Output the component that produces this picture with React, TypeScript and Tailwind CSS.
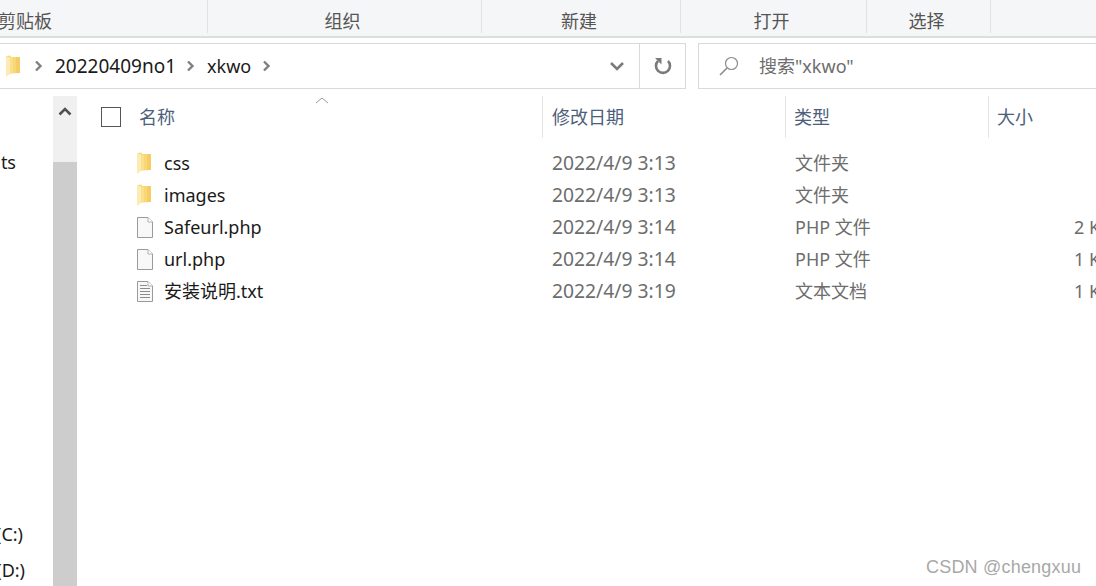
const cjk = "font-['Noto_Sans','Noto_Sans_CJK_SC',sans-serif]";

const ribbon = [
  { label: '剪贴板', width: 'w-[208px] justify-start', inner: '-ml-[2px] whitespace-nowrap' },
  { label: '组织', width: 'w-[274px] justify-center', inner: 'pr-[4px]' },
  { label: '新建', width: 'w-[199px] justify-center', inner: 'pr-[4px]' },
  { label: '打开', width: 'w-[186px] justify-center', inner: 'pr-[4px]' },
  { label: '选择', width: 'w-[124px] justify-center', inner: 'pr-[4px]' },
];

const files = [
  { name: 'css', date: '2022/4/9 3:13', type: '文件夹', size: '', icon: 'folder' },
  { name: 'images', date: '2022/4/9 3:13', type: '文件夹', size: '', icon: 'folder' },
  { name: 'Safeurl.php', date: '2022/4/9 3:14', type: 'PHP 文件', size: '2 KB', icon: 'file' },
  { name: 'url.php', date: '2022/4/9 3:14', type: 'PHP 文件', size: '1 KB', icon: 'file' },
  { name: '安装说明.txt', date: '2022/4/9 3:19', type: '文本文档', size: '1 KB', icon: 'text' },
];

function FolderIcon() {
  return (
    <svg width="16" height="22" viewBox="0 0 16 22" className="shrink-0">
      <path d="M1 1 L5.5 0.5 L6 2 L15 2 L15 18 L5 18.5 L1 21.5 Z" fill="#f8d775" />
      <path d="M1 1 L5 2.5 L5 18.5 L1 21.5 Z" fill="#fcebb4" />
      <path d="M5 2.5 L8 2.5 L8 18 L5 18.5 Z" fill="#fbe08c" />
      <path d="M11 2 L15 2 L15 18 L11 18 Z" fill="#f5cd66" />
    </svg>
  );
}

function FileIcon() {
  return (
    <svg width="18" height="21" viewBox="0 0 18 21" className="shrink-0">
      <path d="M1.5 0.5 H12 L16.5 5 V20.5 H1.5 Z" fill="#f8f8f8" stroke="#9a9a9a" />
      <path d="M12 0.5 V5 H16.5" fill="#fff" stroke="#b0b0b0" />
    </svg>
  );
}

function TextIcon() {
  return (
    <svg width="18" height="21" viewBox="0 0 18 21" className="shrink-0">
      <path d="M1.5 0.5 H12 L16.5 5 V20.5 H1.5 Z" fill="#f8f8f8" stroke="#9a9a9a" />
      <path d="M12 0.5 V5 H16.5" fill="#fff" stroke="#b0b0b0" />
      <path d="M4 4.5 H11 M4 7.5 H14 M4 10.5 H14 M4 13.5 H14 M4 16.5 H14" stroke="#8c8c8c" strokeWidth="1.2" />
    </svg>
  );
}

function Chevron() {
  return (
    <svg width="9" height="12" viewBox="0 0 9 12" className="shrink-0">
      <path d="M2 1.5 L6.5 6 L2 10.5" fill="none" stroke="#7f7f7f" strokeWidth="2.4" />
    </svg>
  );
}

export default function App() {
  return (
    <div className={`relative flex h-[586px] w-[1096px] flex-col overflow-hidden bg-white ${cjk}`}>
      {/* ribbon */}
      <div className="flex h-[38px] shrink-0 border-b-2 border-[#dcdddd] bg-[#f5f6f7] text-[18px] text-[#555]">
        {ribbon.map((r) => (
          <div key={r.label} className={`flex ${r.width} mb-[3px] items-center border-r border-[#e1e2e3] pt-[9px]`}>
            <span className={r.inner}>{r.label}</span>
          </div>
        ))}
      </div>

      {/* address row */}
      <div className="flex h-[58px] shrink-0 items-start pt-[5px]">
        <div className="-ml-[2px] flex h-[46px] w-[688px] items-center border border-[#d9d9d9] text-[#1a1a1a]">
          <div className="ml-[6px]"><FolderIcon /></div>
          <div className="ml-[13px]"><Chevron /></div>
          <span className="ml-[12px] text-[19px]">20220409no1</span>
          <div className="ml-[10px]"><Chevron /></div>
          <span className="ml-[12px] text-[18px]">xkwo</span>
          <div className="ml-[11px]"><Chevron /></div>
          <svg width="16" height="11" viewBox="0 0 16 11" className="ml-[338px] shrink-0">
            <path d="M2 2 L8 8 L14 2" fill="none" stroke="#7a7a7a" strokeWidth="2.6" />
          </svg>
          <div className="ml-[14px] flex h-full w-[47px] items-center justify-center border-l border-[#d9d9d9]">
            <svg width="18" height="20" viewBox="0 0 18 20">
              <path d="M4 5 A7 7 0 1 0 14 5" fill="none" stroke="#7a7a7a" strokeWidth="2.6" />
              <path d="M1 2 L7.5 2 L7.5 8.5 Z" fill="#7a7a7a" />
            </svg>
          </div>
        </div>
        <div className="ml-[12px] flex h-[46px] flex-1 items-center border border-r-0 border-[#d9d9d9]">
          <svg width="22" height="22" viewBox="0 0 22 22" className="ml-[19px] shrink-0">
            <circle cx="13.5" cy="8.5" r="6" fill="none" stroke="#8a8a8a" strokeWidth="1.2" />
            <path d="M9 13 L2 20" stroke="#8a8a8a" strokeWidth="1.6" />
          </svg>
          <span className="ml-[19px] text-[18px] text-[#6d6d6d]">搜索"xkwo"</span>
        </div>
      </div>

      {/* body */}
      <div className="flex min-h-0 flex-1">
        <div className="flex w-[53px] shrink-0 flex-col overflow-hidden text-[18px] leading-[36px] text-[#1a1a1a]">
          <div className="mt-[48px] -ml-[37px] w-[53px] text-right">ts</div>
          <div className="mt-auto flex justify-end pr-[30px]">(C:)</div>
          <div className="mb-[-2px] flex justify-end pr-[28px]">(D:)</div>
        </div>

        {/* scrollbar */}
        <div className="flex w-[24px] shrink-0 flex-col bg-[#f0f0f0]">
          <div className="flex h-[66px] justify-center pt-[10px]">
            <svg width="14" height="10" viewBox="0 0 14 10">
              <path d="M1.5 8.5 L7 3 L12.5 8.5" fill="none" stroke="#505050" strokeWidth="2.6" />
            </svg>
          </div>
          <div className="flex-1 bg-[#cdcdcd]" />
        </div>

        {/* list */}
        <div className="relative min-w-0 flex-1 overflow-hidden text-[18px]">
          <svg width="14" height="7" viewBox="0 0 14 7" className="absolute top-[1px] left-[238px]">
            <path d="M1 6 L7 1 L13 6" fill="none" stroke="#9a9a9a" />
          </svg>
          <div className="flex h-[42px] text-[18px] text-[#4c607a]">
            <div className="flex w-[466px] shrink-0 items-center border-r border-[#e5e5e5] pl-[24px]">
              <span className="h-[20px] w-[20px] border border-[#555] bg-white" />
              <span className="ml-[18px]">名称</span>
            </div>
            <div className="flex w-[243px] shrink-0 items-center border-r border-[#e5e5e5] pl-[9px]">修改日期</div>
            <div className="flex w-[203px] shrink-0 items-center border-r border-[#e5e5e5] pl-[8px]">类型</div>
            <div className="flex flex-1 items-center pl-[8px]">大小</div>
          </div>
          <div className="mt-[9px]">
            {files.map((f) => (
              <div key={f.name} className="flex h-[32px] items-center whitespace-nowrap">
                <div className="flex w-[466px] shrink-0 items-center pl-[59px]">
                  <div className="flex w-[28px]">
                    {f.icon === 'folder' && <FolderIcon />}
                    {f.icon === 'file' && <FileIcon />}
                    {f.icon === 'text' && <TextIcon />}
                  </div>
                  <span className="text-[#1a1a1a]">{f.name}</span>
                </div>
                <div className="w-[243px] shrink-0 pl-[9px] text-[19.3px] text-[#6d6d6d]">{f.date}</div>
                <div className="w-[279px] shrink-0 pl-[9px] text-[#6d6d6d]">{f.type}</div>
                <div className="shrink-0 pl-[9px] text-[#6d6d6d]">{f.size}</div>
              </div>
            ))}
          </div>
        </div>
      </div>

      <div className="absolute top-[556px] left-[926px] font-['Liberation_Sans',sans-serif] text-[18px] leading-[22px] tracking-[0.2px] whitespace-nowrap text-[#a8a8a8]">
        CSDN @chengxuu
      </div>
    </div>
  );
}
